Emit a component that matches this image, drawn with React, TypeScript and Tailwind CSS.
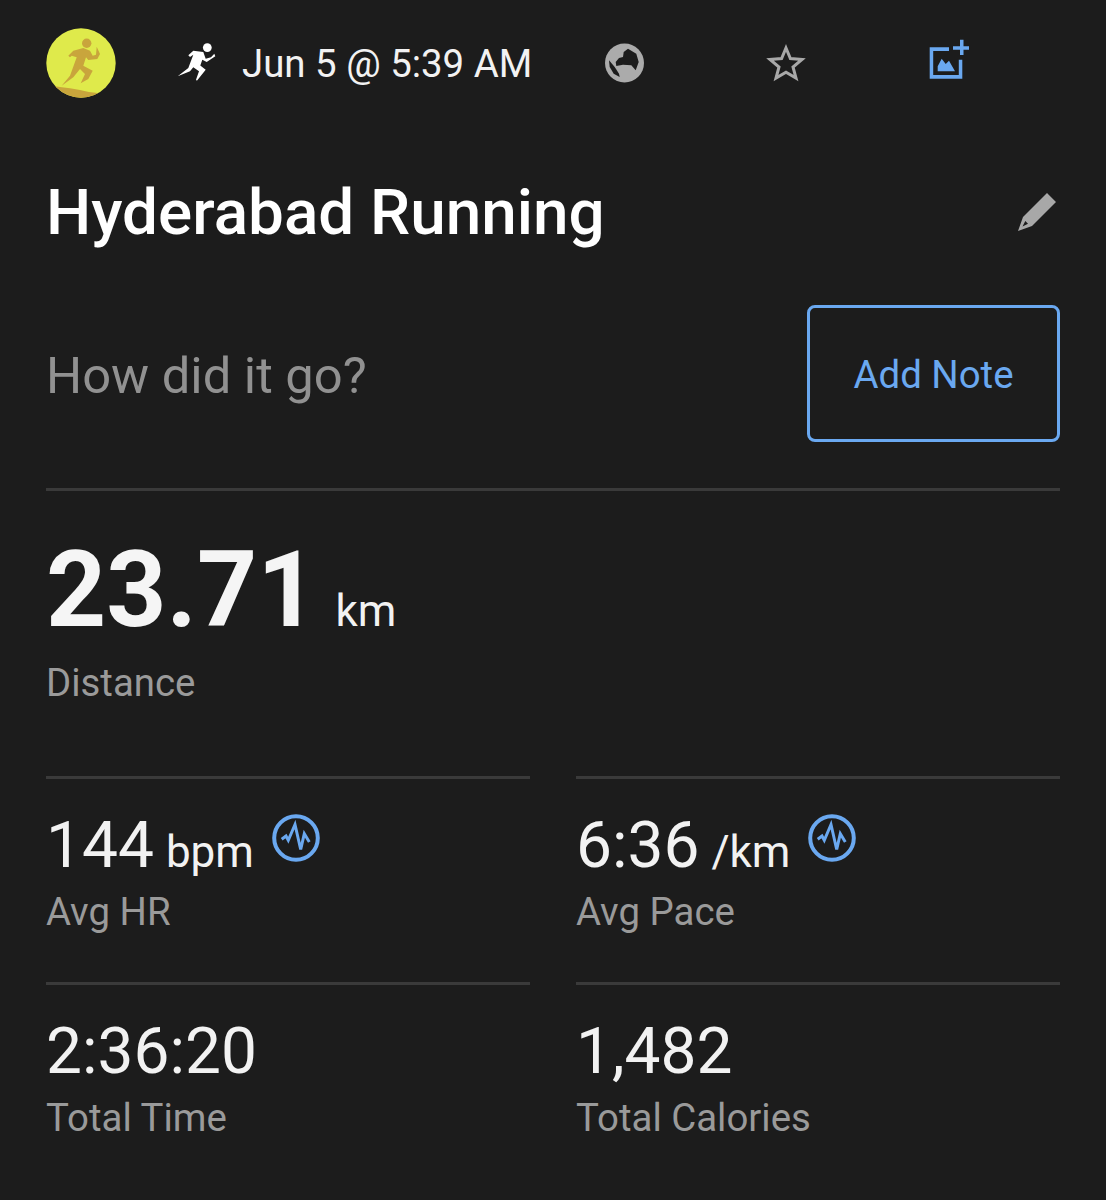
const font = { fontFamily: "Roboto, 'Liberation Sans', sans-serif" };

function Pulse() {
  return (
    <svg viewBox="0 0 48 48" className="w-[48px] h-[48px]" fill="none" stroke="#6aa8f0">
      <circle cx="24" cy="24" r="21.8" strokeWidth="4" />
      <path d="M9.7 25.3 L14 22 L16.3 26.3 L23 10.5 L28.7 35.5 L32.3 19.7 L37.3 28" strokeWidth="3" strokeLinejoin="miter" />
    </svg>
  );
}

function Stat({ value, unit, label, pulse }: { value: string; unit?: string; label: string; pulse?: boolean }) {
  return (
    <div className="flex-1 border-t-[3px] border-[#3a3a3a]">
      <div className="flex items-start h-[90px] pt-[25px]">
        <span className="text-[64px] leading-[84px] text-[#f2f2f2] whitespace-nowrap">{value}</span>
        {unit && <span className="text-[44px] leading-[84px] pt-[6px] text-[#f2f2f2] ml-[12px] whitespace-nowrap">{unit}</span>}
        {pulse && <span className="ml-[18px] mt-[10px]"><Pulse /></span>}
      </div>
      <div className="text-[38.4px] leading-[44px] text-[#9a9a9a] mt-[21px] mb-[48px]">{label}</div>
    </div>
  );
}

export default function App() {
  return (
    <div style={font} className="w-[1106px] h-[1200px] bg-[#1c1c1c] overflow-hidden pl-[46px] pr-[46px]">
      <div className="flex items-center h-[126px]">
        <svg viewBox="0 0 70 70" className="w-[70px] h-[70px] shrink-0">
          <clipPath id="c"><circle cx="35" cy="35" r="34.7" /></clipPath>
          <circle cx="35" cy="35" r="34.7" fill="#dfea4b" />
          <g clipPath="url(#c)">
            <path d="M0 57 L14 59 Q24 60 34 62 Q44 65 56 65.5 L70 63 L70 70 L0 70 Z" fill="#c9a53c" />
          </g>
          <circle cx="40.7" cy="15.3" r="4.7" fill="#c9a53c" />
          <path d="M22.3 27.7 L27.3 22.7 L37.3 20 L44 22.7 L46.7 27.7 L50 26.7 L50.7 18.7 L54 26 L51.3 31 L42.3 32 L40 29.3 L37.3 37.7 L46.7 42.7 L42.3 51 L34.7 55.3 L39 46 L34 41 L27.3 49.3 L15.7 57.7 L24 47.7 L30.7 29.3 L25.7 27.7 L24 29.3 Z" fill="#c9a53c" />
        </svg>
        <svg viewBox="0 0 40 40" className="w-[40px] h-[40px] ml-[62px] shrink-0 overflow-visible" fill="#ffffff">
          <circle cx="29.3" cy="4.6" r="4.4" />
          <path d="M10.3 12.3 L15.3 7.7 L25.3 9 L27.7 15.7 L33 14.3 L36.3 10.7 L37.3 13.3 L28.7 19 L24.3 16.7 L22.3 22.5 L27.7 26.7 L18.9 37.7 L18 36.7 L21 28.3 L15.3 24.3 L12 28.3 L-0.3 33.3 L10.3 25 L15.3 11.7 L12 14 Z" />
        </svg>
        <span className="text-[38.4px] pt-[2px] text-[#f2f2f2] ml-[24px] w-[363px] whitespace-nowrap">Jun 5 @ 5:39 AM</span>
        <svg viewBox="0 0 40 40" className="w-[40px] h-[40px] shrink-0">
          <circle cx="19.5" cy="20" r="19.5" fill="#ababab" />
          <path d="M10.7 19 L14 15 L18 14 L18.7 9 L23 5.7 L31.3 10.7 L33.7 19 L30.7 27.3 L26.3 22.3 L18 21.7 L11.3 23 Z" fill="#1c1c1c" />
          <path d="M4 17.3 L9.7 24 L14 30.7 L14.7 34 L8.7 30.7 L4.7 24 Z" fill="#1c1c1c" />
        </svg>
        <svg viewBox="0 0 40 40" className="w-[40px] h-[40px] ml-[121px] shrink-0" fill="none" stroke="#a8a8a8" strokeWidth="3">
          <path d="M20 5 L24.4 15.6 L36 16.4 L27 24 L30 35 L20 29.2 L10 35 L13 24 L4 16.4 L15.6 15.6 Z" />
        </svg>
        <svg viewBox="0 0 42 42" className="w-[42px] h-[42px] ml-[122px] mb-[8px] shrink-0" fill="#6aa8f0">
          <path d="M1.7 9.3 H21 V13 H5.2 V37 H30.8 V21.7 H34.3 V40.7 H1.7 Z" />
          <path d="M32 1.7 H35.5 V8.3 H41 V11.8 H35.5 V17 H32 V11.8 H25 V8.3 H32 Z" />
          <path d="M9.7 33.3 V28.3 L13.7 20.7 L17.7 26 L21 22.7 L27 33.3 Z" />
        </svg>
      </div>

      <div className="flex items-center justify-between h-[172px]">
        <h1 className="text-[63.8px] font-medium text-white leading-none pt-[1px]">Hyderabad Running</h1>
        <svg viewBox="0 0 40 40" className="w-[40px] h-[40px] mr-[3px] shrink-0" fill="#a8a8a8">
          <path fillRule="evenodd" d="M30 1 L39 10 L15 34 L1 39 L6 25 Z M8.3 29 L11 31.7 L5.5 34.5 Z" />
        </svg>
      </div>

      <div className="flex items-center justify-between h-[150px]">
        <span className="text-[50.7px] pt-[7px] text-[#919191]">How did it go?</span>
        <button className="w-[253px] h-[137px] pt-[4px] border-[3px] border-[#6aa8f0] rounded-[8px] text-[38.4px] text-[#6aa8f0]">Add Note</button>
      </div>

      <div className="border-t-[3px] border-[#3a3a3a] mt-[40px] h-[288px]">
        <div className="flex items-baseline h-[122px] pt-[39px]">
          <span className="text-[105px] font-bold leading-[122px] text-[#f5f5f5]">23.71</span>
          <span className="text-[44px] text-[#f2f2f2] ml-[18px]">km</span>
        </div>
        <div className="text-[38.4px] leading-[44px] text-[#9a9a9a] mt-[48px]">Distance</div>
      </div>

      <div className="flex gap-[46px]">
        <Stat value="144" unit="bpm" label="Avg HR" pulse />
        <Stat value="6:36" unit="/km" label="Avg Pace" pulse />
      </div>
      <div className="flex gap-[46px]">
        <Stat value="2:36:20" label="Total Time" />
        <Stat value="1,482" label="Total Calories" />
      </div>
    </div>
  );
}
